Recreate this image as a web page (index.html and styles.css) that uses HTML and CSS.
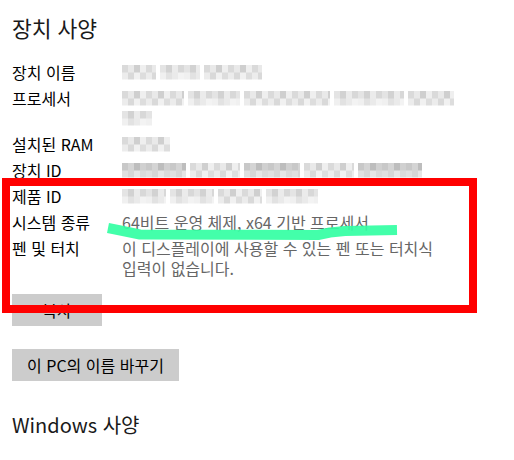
FILE: index.html
```html
<!DOCTYPE html>
<html lang="ko">
<head>
    <meta charset="UTF-8">
    <title>정보</title>
    <link rel="stylesheet" href="styles.css">
</head>
<body>
<div class="page">
    <h1 class="heading heading-top">장치 사양</h1>

    <div class="specs">
        <div class="row">
            <div class="label">장치 이름</div>
            <div class="value">
                <div class="line"><span class="blur" style="width:34px"></span><span class="blur alt" style="width:40px"></span><span class="blur" style="width:58px"></span></div>
            </div>
        </div>
        <div class="row">
            <div class="label">프로세서</div>
            <div class="value">
                <div class="line"><span class="blur" style="width:62px"></span><span class="blur alt" style="width:52px"></span><span class="blur" style="width:86px"></span><span class="blur alt" style="width:70px"></span><span class="blur" style="width:46px"></span></div>
                <div class="line"><span class="blur alt" style="width:30px"></span></div>
            </div>
        </div>
        <div class="row">
            <div class="label">설치된 RAM</div>
            <div class="value">
                <div class="line"><span class="blur" style="width:48px"></span></div>
            </div>
        </div>
        <div class="row">
            <div class="label">장치 ID</div>
            <div class="value">
                <div class="line"><span class="blur dark" style="width:64px"></span><span class="blur" style="width:50px"></span><span class="blur dark" style="width:56px"></span><span class="blur" style="width:50px"></span><span class="blur dark" style="width:64px"></span></div>
            </div>
        </div>
        <div class="row">
            <div class="label">제품 ID</div>
            <div class="value">
                <div class="line"><span class="blur alt" style="width:44px"></span><span class="blur alt" style="width:44px"></span><span class="blur" style="width:44px"></span><span class="blur alt" style="width:52px"></span></div>
            </div>
        </div>
        <div class="row">
            <div class="label">시스템 종류</div>
            <div class="value">64비트 운영 체제, x64 기반 프로세서</div>
        </div>
        <div class="row">
            <div class="label">펜 및 터치</div>
            <div class="value">이 디스플레이에 사용할 수 있는 펜 또는 터치식 입력이 없습니다.</div>
        </div>
    </div>

    <button class="btn btn-copy">복사</button>
    <button class="btn btn-rename">이 PC의 이름 바꾸기</button>

    <h2 class="heading heading-next">Windows 사양</h2>
</div>

<div class="mark-box"></div>
<svg class="mark-line" width="514" height="460" viewBox="0 0 514 460">
    <polyline points="108,228 118,230 140,234.5 318,235 330,232.5 345,231 397,230"
              fill="none" stroke="#33ffa3" stroke-opacity="0.92" stroke-width="10" stroke-linejoin="bevel"/>
</svg>
</body>
</html>
```

FILE: styles.css
```css
*{
    padding: 0;
    margin: 0;
    box-sizing: border-box;
}
html, body{
    background: #ffffff;
}
body{
    font-family: "Noto Sans CJK KR", "Noto Sans", sans-serif;
    color: #000000;
    position: relative;
    width: 514px;
    height: 460px;
    overflow: hidden;
    word-break: keep-all;
}
.page{
    padding: 14px 12px;
}
.heading{
    font-size: 20px;
    line-height: 28px;
    font-weight: normal;
    color: #1a1a1a;
}
.heading-top{
    font-size: 21.5px;
}
.specs{
    margin-top: 20px;
    display: flex;
    flex-direction: column;
    gap: 6px;
}
.row{
    display: flex;
    font-size: 16px;
    line-height: 20px;
}
.label{
    width: 110px;
    flex: none;
    color: #000000;
}
.value{
    width: 340px;
    color: #666666;
}
.line{
    height: 20px;
    display: flex;
    align-items: center;
    gap: 4px;
}

/* pixelated blocks standing in for hidden values */
.blur{
    display: block;
    height: 15px;
    background-image:
        repeating-linear-gradient(90deg, #dadada 0 6px, #e9e9e9 6px 12px, #cfcfcf 12px 18px, #efefef 18px 24px),
        repeating-linear-gradient(90deg, #ececec 0 6px, #d9d9d9 6px 12px, #f1f1f1 12px 18px, #dddddd 18px 24px);
    background-size: 100% 50%, 100% 50%;
    background-position: top left, bottom left;
    background-repeat: no-repeat;
}
.blur.alt{
    background-image:
        repeating-linear-gradient(90deg, #e4e4e4 0 6px, #d2d2d2 6px 12px, #ebebeb 12px 18px, #d8d8d8 18px 24px),
        repeating-linear-gradient(90deg, #f0f0f0 0 6px, #e2e2e2 6px 12px, #eaeaea 12px 18px, #f3f3f3 18px 24px);
}
.blur.dark{
    background-image:
        repeating-linear-gradient(90deg, #c8c8c8 0 6px, #d4d4d4 6px 12px, #bdbdbd 12px 18px, #d0d0d0 18px 24px),
        repeating-linear-gradient(90deg, #e0e0e0 0 6px, #d6d6d6 6px 12px, #e6e6e6 12px 18px, #dadada 18px 24px);
}

.btn{
    display: block;
    height: 32px;
    padding: 0;
    border: none;
    background: #cccccc;
    font-family: "Noto Sans CJK KR", "Noto Sans", sans-serif;
    font-size: 16px;
    color: #000000;
    text-align: center;
}
.btn-copy{
    width: 90px;
    margin-top: 16px;
    margin-bottom: 23px;
}
.btn-rename{
    width: 167px;
}
.heading-next{
    margin-top: 30px;
}

/* annotation marks drawn over the screenshot */
.mark-box{
    position: absolute;
    left: 2px;
    top: 178px;
    width: 475px;
    height: 135px;
    border: 8px solid #ff0000;
}
.mark-line{
    position: absolute;
    left: 0;
    top: 0;
    pointer-events: none;
}
```
